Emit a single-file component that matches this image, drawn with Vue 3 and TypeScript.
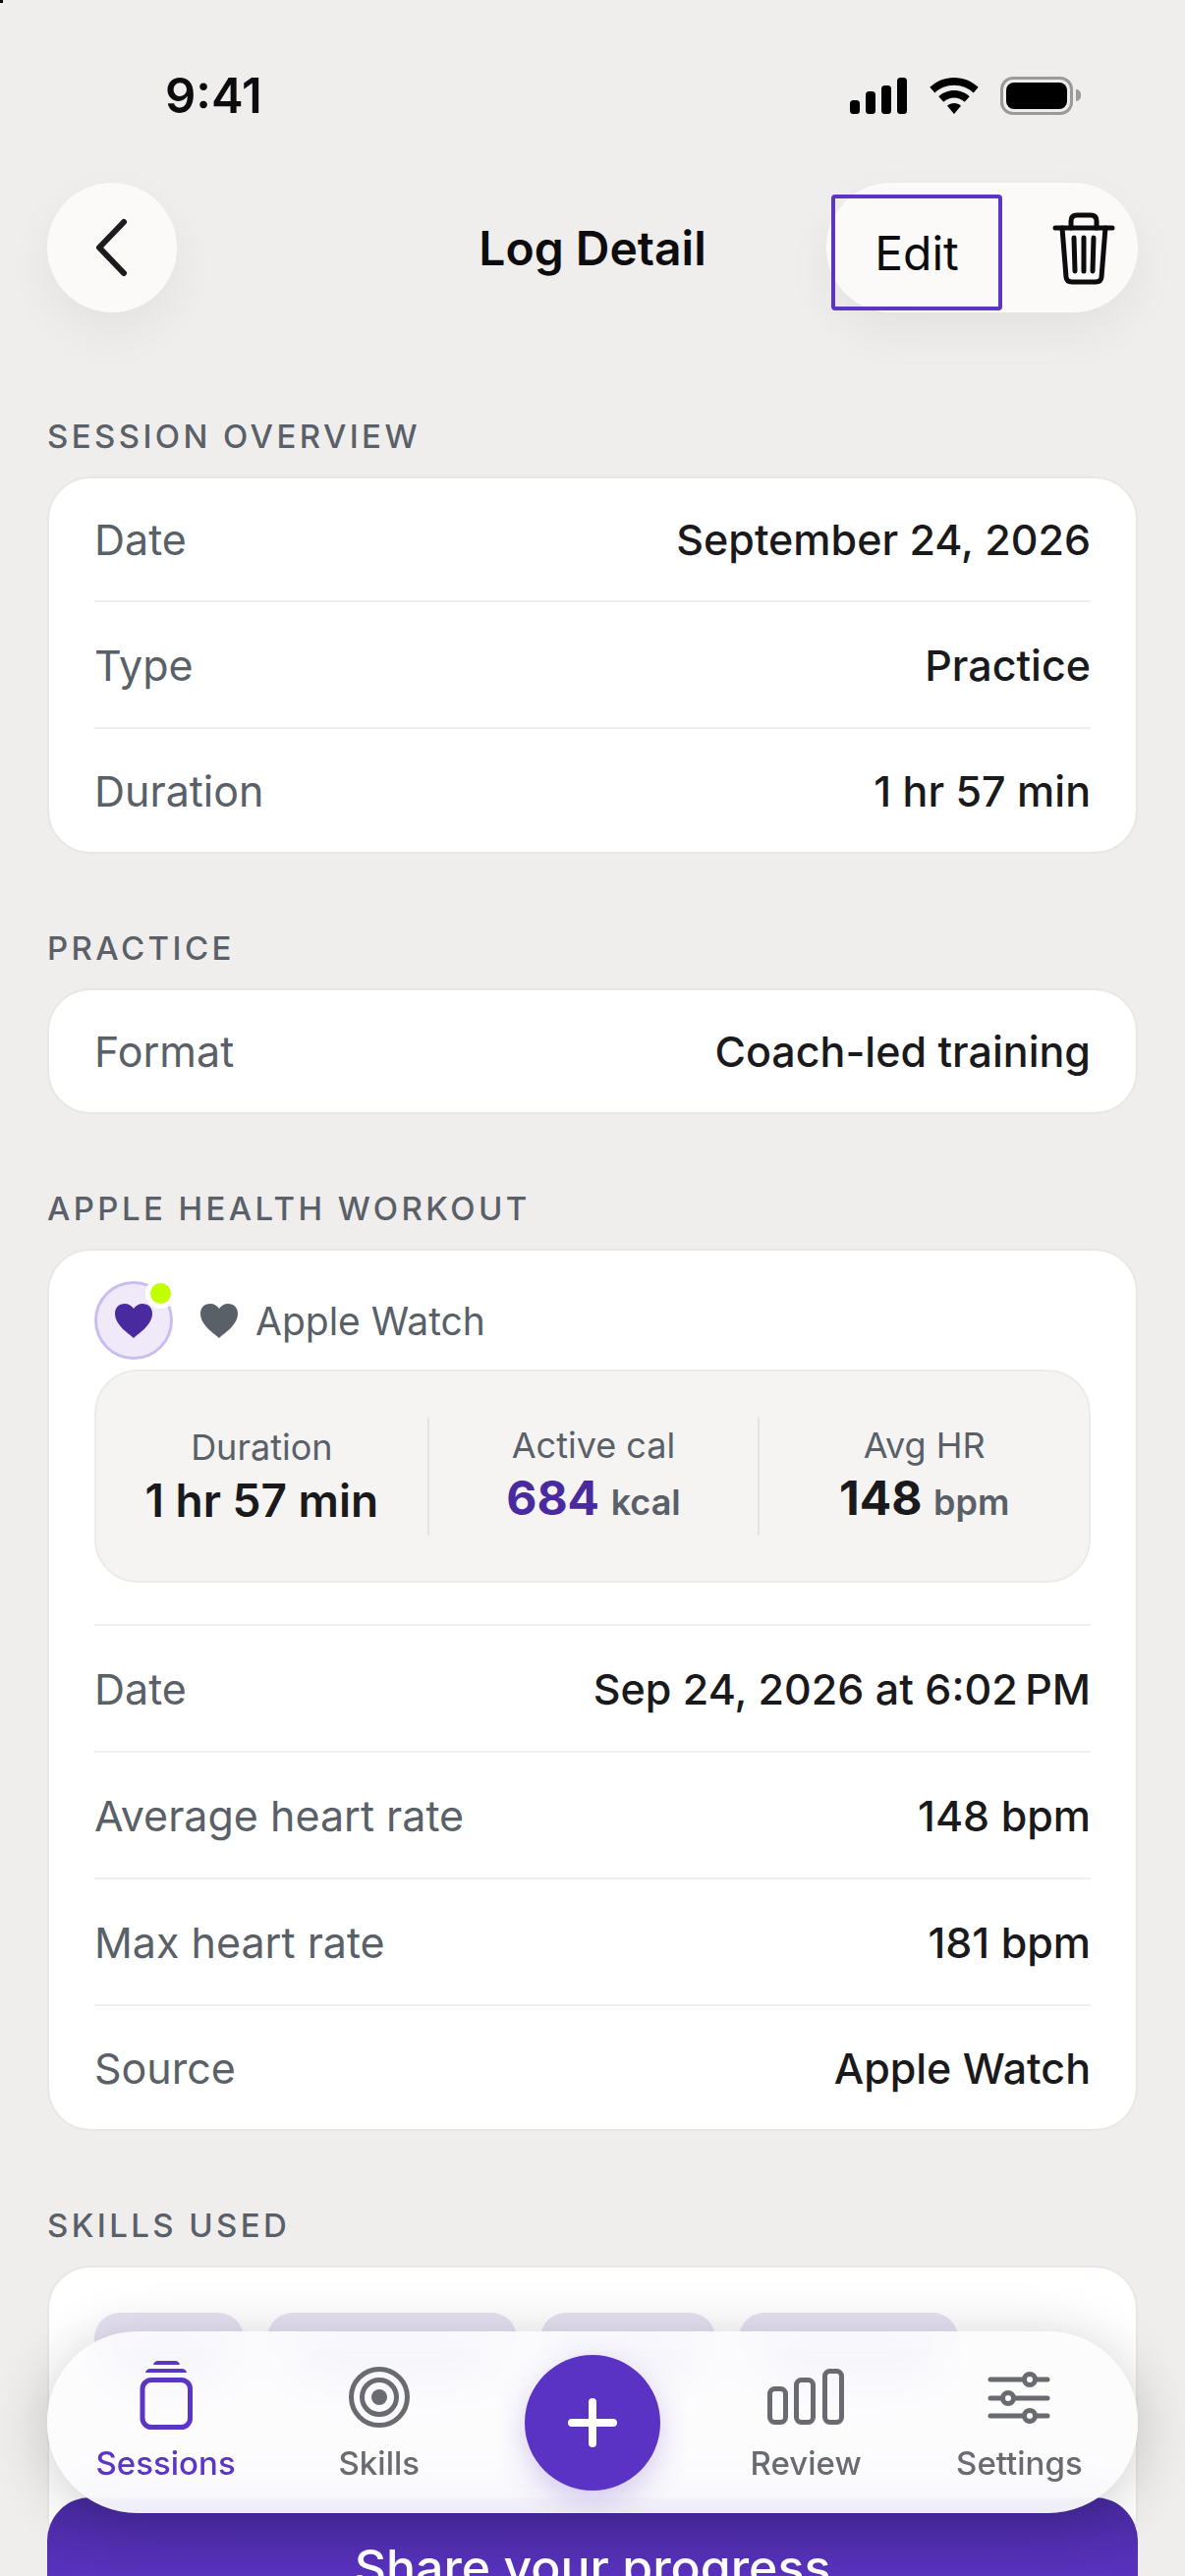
<template>
  <div class="screen">
    <i class="corner"></i>

    <div class="status">
      <span class="time">9:41</span>
      <div class="status-icons">
        <svg class="signal" width="58" height="37" viewBox="0 0 58 37">
          <rect x="0" y="23" width="10" height="14" rx="3.5" />
          <rect x="16" y="14" width="10" height="23" rx="3.5" />
          <rect x="32" y="8" width="10" height="29" rx="3.5" />
          <rect x="48" y="0" width="10" height="37" rx="3.5" />
        </svg>
        <svg class="wifi" width="50" height="37" viewBox="0 0 50 37">
          <path d="M25 0C15.500 0 6.800 3.700 0.300 9.800L5.300 15.500C10.400 10.700 17.300 7.800 25 7.800S39.600 10.700 44.700 15.500L49.700 9.800C43.200 3.700 34.500 0 25 0Z" />
          <path d="M25 13C19 13 13.500 15.300 9.300 19.200L14.300 24.800C17.100 22.200 20.900 20.600 25 20.600S32.900 22.200 35.700 24.800L40.700 19.200C36.500 15.300 31 13 25 13Z" />
          <path d="M25 26C22.300 26 19.900 27 18 28.700L25 37L32 28.700C30.100 27 27.700 26 25 26Z" />
        </svg>
        <div class="battery"><span class="battery-fill"></span></div>
      </div>
    </div>

    <header class="topbar">
      <button class="round-btn">
        <svg width="36" height="60" viewBox="0 0 36 60" fill="none">
          <path d="M31 4L6 30L31 56" transform="translate(0 0)" stroke="#1c1c1e" stroke-width="6" stroke-linecap="round" stroke-linejoin="round" />
        </svg>
      </button>
      <h1 class="title">Log Detail</h1>
      <div class="actions">
        <button class="edit">Edit</button>
        <button class="trash">
          <svg width="64" height="74" viewBox="0 0 64 74" fill="none" stroke="#0c0c0e" stroke-width="5" stroke-linecap="round" stroke-linejoin="round">
            <path d="M3 16H61" />
            <path d="M19 16V9Q19 3 25 3H39Q45 3 45 9V16" />
            <path d="M10 16L14 66Q14.500 71 20 71H44Q49.500 71 50 66L54 16" />
            <path d="M22 26L23 60M32 26V60M42 26L41 60" />
          </svg>
        </button>
      </div>
    </header>

    <section class="section first">
      <h2 class="section-label">SESSION OVERVIEW</h2>
      <div class="card">
        <div v-for="r in overview" :key="r.k" class="row">
          <span class="row-k">{{ r.k }}</span>
          <span class="row-v">{{ r.v }}</span>
        </div>
      </div>
    </section>

    <section class="section">
      <h2 class="section-label">PRACTICE</h2>
      <div class="card">
        <div class="row">
          <span class="row-k">Format</span>
          <span class="row-v">Coach-led training</span>
        </div>
      </div>
    </section>

    <section class="section">
      <h2 class="section-label">APPLE HEALTH WORKOUT</h2>
      <div class="card health">
        <div class="health-head">
          <div class="health-badge">
            <svg width="38" height="35" viewBox="0 0 38 35"><path :d="heart" fill="#4a2a9f" /></svg>
            <i class="health-dot"></i>
          </div>
          <svg class="source-heart" width="38" height="35" viewBox="0 0 38 35"><path :d="heart" fill="#5a6067" /></svg>
          <span class="source-name">Apple Watch</span>
        </div>
        <div class="metrics">
          <div class="metric">
            <span class="metric-k">Duration</span>
            <span class="metric-v">1 hr 57 min</span>
          </div>
          <div class="metric">
            <span class="metric-k">Active cal</span>
            <span class="metric-v"><b class="accent">684</b> <small>kcal</small></span>
          </div>
          <div class="metric">
            <span class="metric-k">Avg HR</span>
            <span class="metric-v"><b>148</b> <small>bpm</small></span>
          </div>
        </div>
        <div class="health-rows">
          <div v-for="r in workout" :key="r.k" class="row">
            <span class="row-k">{{ r.k }}</span>
            <span class="row-v">{{ r.v }}</span>
          </div>
        </div>
      </div>
    </section>

    <section class="section">
      <h2 class="section-label">SKILLS USED</h2>
      <div class="card skills">
        <div v-for="w in chips" :key="w" class="chip" :style="{ width: w + 'px' }"><i></i></div>
      </div>
    </section>

    <button class="share">Share your progress</button>

    <nav class="nav">
      <div class="nav-item active">
        <svg width="80" height="80" viewBox="0 0 80 80" fill="none">
          <path d="M27 7Q28 3 32 3H49Q53 3 54 7Z" fill="currentColor" />
          <path d="M19 15Q20 11 24 11H56Q60 11 61 15Z" fill="currentColor" />
          <rect x="16" y="22.500" width="48.500" height="48" rx="9" stroke="currentColor" stroke-width="5" />
        </svg>
        <span>Sessions</span>
      </div>
      <div class="nav-item">
        <svg width="80" height="80" viewBox="0 0 80 80" fill="none" stroke="currentColor" stroke-width="5">
          <circle cx="40" cy="40" r="28.500" />
          <circle cx="40" cy="40" r="17.500" />
          <circle cx="40" cy="40" r="8" fill="currentColor" stroke="none" />
        </svg>
        <span>Skills</span>
      </div>
      <button class="fab">
        <svg width="50" height="50" viewBox="0 0 50 50"><path d="M25 4V46M4 25H46" stroke="#fff" stroke-width="8" stroke-linecap="round" /></svg>
      </button>
      <div class="nav-item">
        <svg width="80" height="80" viewBox="0 0 80 80" fill="none" stroke="currentColor" stroke-width="5">
          <rect x="3.500" y="31.500" width="16" height="34" rx="5" />
          <rect x="30.500" y="22.500" width="17" height="43" rx="5" />
          <rect x="59.500" y="13.500" width="17" height="52" rx="5" />
        </svg>
        <span>Review</span>
      </div>
      <div class="nav-item">
        <svg width="80" height="80" viewBox="0 0 80 80" fill="none" stroke="currentColor" stroke-width="5" stroke-linecap="round">
          <path d="M11 22H69M11 41H69M11 59H69" />
          <circle cx="51" cy="22" r="5.500" fill="#fbfbfc" />
          <circle cx="29" cy="41" r="5.500" fill="#fbfbfc" />
          <circle cx="51" cy="59" r="5.500" fill="#fbfbfc" />
        </svg>
        <span>Settings</span>
      </div>
    </nav>
  </div>
</template>

<script setup lang="ts">
const heart =
  'M19 35C14 30 0 22 0 10C0 4 4 0 10 0C14 0 17 2 19 5C21 2 24 0 28 0C34 0 38 4 38 10C38 22 24 30 19 35Z'

const overview = [
  { k: 'Date', v: 'September 24, 2026' },
  { k: 'Type', v: 'Practice' },
  { k: 'Duration', v: '1 hr 57 min' },
]

const workout = [
  { k: 'Date', v: 'Sep 24, 2026 at 6:02\u202fPM' },
  { k: 'Average heart rate', v: '148 bpm' },
  { k: 'Max heart rate', v: '181 bpm' },
  { k: 'Source', v: 'Apple Watch' },
]

const chips = [152, 254, 178, 223]
</script>

<style>
html,
body {
  margin: 0;
  background: #efeeed;
}
</style>

<style scoped>
.screen {
  position: relative;
  width: 1206px;
  height: 2622px;
  overflow: hidden;
  background: #efeeed;
  font-family: Inter, 'Noto Sans', sans-serif;
  color: #1a1a1c;
}
button {
  font-family: inherit;
  border: 0;
  padding: 0;
  background: none;
  color: inherit;
}
.corner {
  position: absolute;
  left: 0;
  top: 0;
  width: 3px;
  height: 3px;
  background: #000;
}

.status {
  height: 106px;
  padding: 44px 114px 0 168px;
  display: flex;
  align-items: center;
  justify-content: space-between;
}
.time {
  font-size: 49px;
  font-weight: 600;
  color: #0c0c0e;
}
.status-icons {
  display: flex;
  align-items: center;
  gap: 23px;
}
.wifi {
  margin-right: -1px;
}
.battery {
  position: relative;
  box-sizing: border-box;
  width: 74px;
  height: 39px;
  padding: 3px;
  border: 3px solid #9a9a9a;
  border-radius: 13px;
}
.battery::after {
  content: '';
  position: absolute;
  right: -11px;
  top: 10px;
  width: 5px;
  height: 12px;
  border-radius: 0 6px 6px 0;
  background: #9a9a9a;
}
.battery-fill {
  display: block;
  height: 100%;
  background: #000;
  border-radius: 8px;
}

.topbar {
  margin-top: 36px;
  padding: 0 48px;
  height: 132px;
  display: flex;
  align-items: center;
  justify-content: space-between;
  position: relative;
}
.round-btn {
  width: 132px;
  height: 132px;
  border-radius: 50%;
  background: #fbfaf8;
  box-shadow: 0 20px 50px rgba(0, 0, 0, 0.05);
  display: flex;
  align-items: center;
  justify-content: center;
  padding-right: 2px;
}
.title {
  position: absolute;
  left: 0;
  right: 0;
  margin: 0;
  text-align: center;
  font-size: 48px;
  font-weight: 600;
  color: #0c0c0e;
}
.actions {
  box-sizing: border-box;
  width: 317px;
  height: 132px;
  border-radius: 66px;
  background: #fbfaf8;
  box-shadow: 0 20px 50px rgba(0, 0, 0, 0.05);
  display: flex;
  align-items: flex-start;
  padding: 12px 0 0 5px;
  position: relative;
}
.edit {
  box-sizing: border-box;
  width: 174px;
  height: 118px;
  border: 4px solid #5b35c4;
  border-radius: 4px;
  font-size: 48px;
  color: #0c0c0e;
}
.trash {
  margin: 18px 0 0 51px;
  display: flex;
}

.section {
  margin-top: 76px;
  padding: 0 48px;
}
.section.first {
  margin-top: 106px;
}
.section-label {
  margin: 0 0 21px;
  height: 40px;
  line-height: 40px;
  font-size: 33px;
  font-weight: 500;
  letter-spacing: 3.4px;
  color: #5a6067;
}

.card {
  box-sizing: border-box;
  background: #fff;
  border: 2px solid #e8e7e6;
  border-radius: 44px;
  padding: 0 46px;
}
.row {
  box-sizing: border-box;
  height: 129px;
  border-top: 2px solid #f0efee;
  display: flex;
  align-items: center;
  justify-content: space-between;
}
.row:last-child {
  height: 127px;
}
.row:first-child {
  height: 124px;
  border-top: 0;
}
.health-rows .row:first-child {
  height: 129px;
  border-top: 2px solid #f0efee;
}
.row-k {
  font-size: 43px;
  color: #5a6067;
}
.row-v {
  font-size: 43px;
  font-weight: 500;
  color: #1a1a1c;
}

.health {
  padding-top: 31px;
}
.health-head {
  display: flex;
  align-items: center;
}
.health-badge {
  position: relative;
  box-sizing: border-box;
  width: 80px;
  height: 80px;
  border-radius: 50%;
  background: #efe9fa;
  border: 3px solid #c9bfec;
  display: flex;
  align-items: center;
  justify-content: center;
}
.health-dot {
  position: absolute;
  top: -1px;
  right: -1px;
  width: 21px;
  height: 21px;
  border-radius: 50%;
  background: #c2ff00;
  box-shadow: 0 0 0 5px #fff;
}
.source-heart {
  margin-left: 28px;
}
.source-name {
  margin-left: 18px;
  font-size: 39px;
  color: #5a6067;
}
.metrics {
  box-sizing: border-box;
  margin: 10px 0 42px;
  height: 217px;
  background: #f5f4f3;
  border: 2px solid #ecebea;
  border-radius: 44px;
  padding-top: 47px;
  display: grid;
  grid-template-columns: repeat(3, 1fr);
  align-items: start;
}
.metric {
  height: 120px;
  display: flex;
  flex-direction: column;
  align-items: center;
  justify-content: center;
  gap: 4px;
}
.metric + .metric {
  border-left: 2px solid #e4e3e2;
}
.metric-k {
  font-size: 36px;
  line-height: 44px;
  color: #5a6067;
}
.metric-v {
  font-size: 46px;
  line-height: 56px;
  font-weight: 600;
  color: #1a1a1c;
}
.metric-v b {
  font-size: 48px;
  font-weight: 700;
}
.metric-v small {
  font-size: 36px;
  font-weight: 600;
  color: #5a6067;
}
.accent {
  color: #4a2a9f;
}

.skills {
  display: flex;
  gap: 24px;
  padding-top: 46px;
  height: 300px;
}
.chip {
  height: 74px;
  border-radius: 26px;
  background: #e6e2f3;
  display: flex;
  align-items: center;
  justify-content: center;
  padding-top: 28px;
  box-sizing: border-box;
}
.chip i {
  display: block;
  width: 70%;
  height: 24px;
  background: rgba(91, 53, 196, 0.45);
}

.share {
  position: absolute;
  left: 48px;
  top: 2542px;
  width: 1110px;
  height: 142px;
  border-radius: 44px;
  background: linear-gradient(180deg, #482aa0, #5a33c0 60%);
  color: #fff;
  font-size: 50px;
  font-weight: 500;
}

.nav {
  position: absolute;
  left: 48px;
  top: 2373px;
  box-sizing: border-box;
  width: 1110px;
  height: 185px;
  padding: 27px 12px 0;
  border-radius: 92px;
  background: rgba(252, 252, 253, 0.9);
  -webkit-backdrop-filter: blur(24px);
  backdrop-filter: blur(24px);
  box-shadow: 0 8px 60px rgba(0, 0, 0, 0.2);
  display: grid;
  grid-template-columns: repeat(5, 1fr);
  justify-items: center;
  align-items: start;
}
.nav-item {
  display: flex;
  flex-direction: column;
  align-items: center;
  gap: 7px;
  color: #6a6b70;
  font-size: 33px;
  line-height: 40px;
  font-weight: 500;
}
.nav-item.active {
  color: #5b35c4;
}
.fab {
  margin-top: -3px;
  width: 138px;
  height: 138px;
  border-radius: 50%;
  background: #5a33c4;
  box-shadow: 0 10px 30px rgba(91, 53, 196, 0.25);
  display: flex;
  align-items: center;
  justify-content: center;
}
</style>
